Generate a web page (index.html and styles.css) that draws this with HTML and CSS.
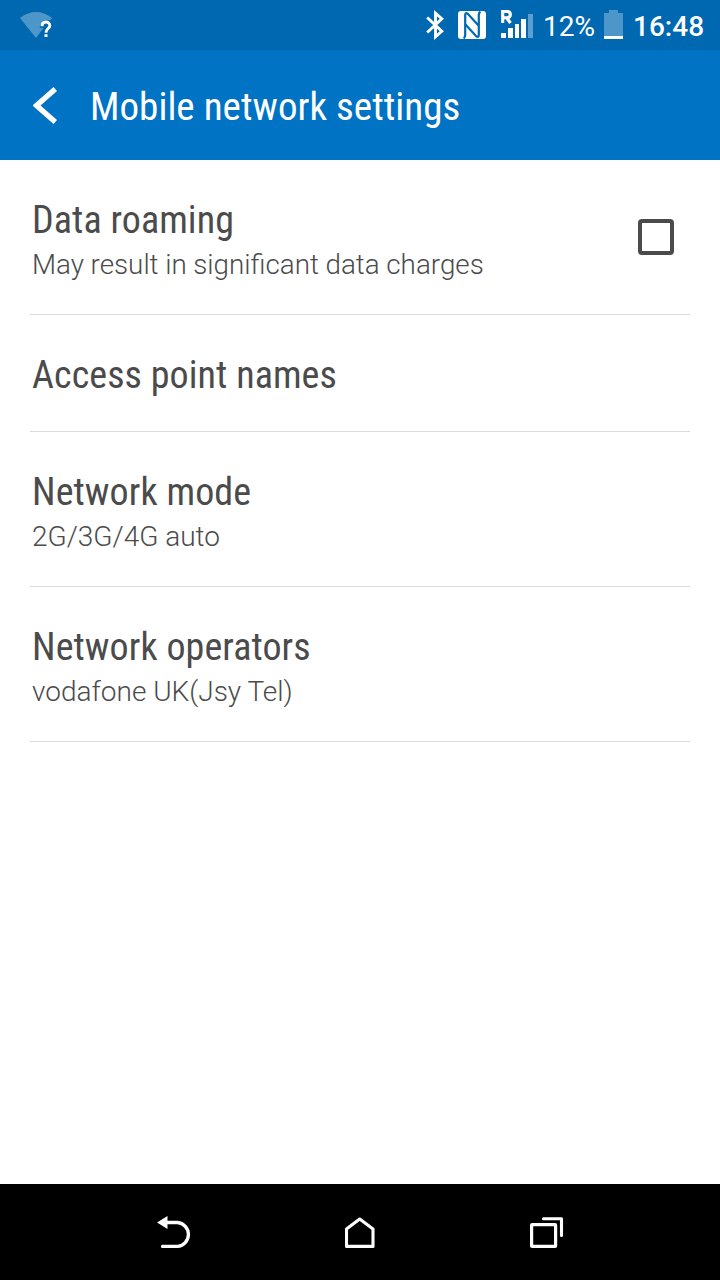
FILE: index.html
```html
<!DOCTYPE html>
<html lang="en">
<head>
    <meta charset="UTF-8">
    <meta name="viewport" content="width=device-width, initial-scale=1.0">
    <title>Mobile network settings</title>
    <link rel="stylesheet" href="styles.css">
</head>
<body>

    <div class="status-bar">
        <svg class="icon-wifi" width="34" height="30" viewBox="0 0 34 30">
            <path d="M0 6 Q16 -5.800 32 6 L30.500 8.200 C25 6.300 19.800 9.500 19.800 16 H23.500 L16 26 Z" fill="#4d96c9"/>
            <path d="M22 14.300 C22 8.700 29.800 8.700 29.800 13.500 C29.800 16.700 26 16.500 26 20.800" fill="none" stroke="#fff" stroke-width="2.900"/>
            <rect x="24.500" y="22.200" width="3" height="2.800" fill="#fff"/>
        </svg>

        <div class="status-right">
            <svg class="icon-bluetooth" width="18" height="30" viewBox="0 0 18 30">
                <path d="M1.200 7.500 L15.800 21.300 L9.500 26.800 V3.200 L15.800 8.700 L1.200 22.500" fill="none" stroke="#fff" stroke-width="2.900"/>
            </svg>
            <svg class="icon-nfc" width="28" height="28" viewBox="0 0 28 28">
                <rect width="28" height="28" rx="3" fill="#fff"/>
                <path d="M5.500 27.300 Q7.200 26.500 7.200 24 V4 Q7.200 1.200 9.800 2.800 L20.500 14.500" fill="none" stroke="#0068b0" stroke-width="2.200"/>
                <path d="M22.500 .700 Q20.800 1.500 20.800 4 V24 Q20.800 26.800 18.200 25.200 L7.500 13.500" fill="none" stroke="#0068b0" stroke-width="2.200"/>
            </svg>
            <svg class="icon-signal" width="32" height="28" viewBox="0 0 32 28">
                <path d="M1.700 13 V1.500 H6 C10.500 1.500 10.500 7.700 6 7.700 H2 M5.500 7.700 L9.500 13" fill="none" stroke="#fff" stroke-width="3.100"/>
                <path d="M0 23h5v5H0zM7 18h5v10H7zM14 14h4v14h-4zM20 9h5v19h-5z" fill="#fff"/>
                <path d="M27 4h5v24h-5z" fill="#5c9fcf"/>
            </svg>
            <span class="battery-level">12%</span>
            <svg class="icon-battery" width="19" height="29" viewBox="0 0 19 29">
                <path d="M0 3h5V0h9v3h5v23H0z" fill="#4d96c9"/>
                <path d="M0 26h19v3H0z" fill="#fff"/>
            </svg>
            <span class="clock">16:48</span>
        </div>
    </div>

    <header class="header">
        <svg class="icon-back" width="24" height="37" viewBox="0 0 24 37">
            <path d="M22.300 2 L3.500 18.500 L22.300 35" fill="none" stroke="#fff" stroke-width="5.400"/>
        </svg>
        <h1 class="header-title">Mobile network settings</h1>
    </header>

    <main class="settings">
        <div class="setting">
            <div class="setting-text">
                <h2 class="setting-title">Data roaming</h2>
                <p class="setting-summary sentence">May result in significant data charges</p>
            </div>
            <span class="checkbox"></span>
        </div>
        <div class="setting">
            <div class="setting-text">
                <h2 class="setting-title">Access point names</h2>
            </div>
        </div>
        <div class="setting">
            <div class="setting-text">
                <h2 class="setting-title">Network mode</h2>
                <p class="setting-summary">2G/3G/4G auto</p>
            </div>
        </div>
        <div class="setting">
            <div class="setting-text">
                <h2 class="setting-title">Network operators</h2>
                <p class="setting-summary">vodafone UK(Jsy Tel)</p>
            </div>
        </div>
    </main>

    <nav class="nav-bar">
        <svg class="nav-back" width="35" height="34" viewBox="0 0 35 34">
            <path d="M9 6.500 H20.500 A12 12 0 0 1 20.500 30.400 H5.500" fill="none" stroke="#fff" stroke-width="3.300" stroke-linecap="round"/>
            <path d="M0 6.500 L10.500 0 V13 Z" fill="#fff"/>
        </svg>
        <svg class="nav-home" width="30" height="32" viewBox="0 0 30 32">
            <path d="M1.500 12 L14.700 2 L28 12 V29.400 H1.500 Z" fill="none" stroke="#fff" stroke-width="3.100" stroke-linejoin="round"/>
        </svg>
        <svg class="nav-recent" width="34" height="32" viewBox="0 0 34 32">
            <rect x="1.600" y="7.700" width="24" height="21.700" rx=".5" fill="none" stroke="#fff" stroke-width="3.200"/>
            <path d="M13.500 1.700 H31.500 V18.500" fill="none" stroke="#fff" stroke-width="3.100" stroke-linecap="round" stroke-linejoin="round"/>
        </svg>
    </nav>

</body>
</html>
```
FILE: styles.css
```css
:root {
    --status-blue: #0068b0;
    --header-blue: #0073c4;
    --text-dark: #4b4b4b;
    --divider: #dcdcdc;
}

* { box-sizing: border-box; }

body {
    font-family: Roboto, "Liberation Sans", sans-serif;
    margin: 0;
    height: 1280px;
    display: flex;
    flex-direction: column;
    background-color: #fff;
    color: var(--text-dark);
    overflow: hidden;
}

svg { display: block; flex-shrink: 0; }
h1, h2, p { margin: 0; white-space: nowrap; }

/* Status bar */
.status-bar {
    height: 50px;
    padding: 0 16px 0 20px;
    display: flex;
    justify-content: space-between;
    align-items: flex-start;
    background-color: var(--status-blue);
    color: #fff;
}
.icon-wifi { margin-top: 12px; }
.status-right { display: flex; align-items: flex-start; }
.icon-bluetooth { margin: 10px 14px 0 0; }
.icon-nfc { margin: 11px 15px 0 0; }
.icon-signal { margin: 10px 10px 0 0; }
.battery-level, .clock { font-size: 28px; line-height: 34px; margin-top: 10px; }
.battery-level { width: 53px; margin-right: 8px; }
.icon-battery { margin: 10px 10px 0 0; }
.clock { width: 71px; font-weight: 500; }

/* Header */
.header {
    height: 110px;
    padding: 0 33px;
    display: flex;
    align-items: center;
    background-color: var(--header-blue);
    color: #fff;
}
.header-title {
    margin: 4px 0 0 33px;
    font-family: "Roboto Condensed", Roboto, sans-serif;
    font-stretch: 75%;
    font-size: 39px;
    font-weight: 400;
    line-height: 46px;
    letter-spacing: 0.04px;
}

/* Settings list */
.settings { flex: 1; padding: 0 30px; }
.setting {
    padding: 38px 16px 34px 2px;
    display: flex;
    justify-content: space-between;
    border-bottom: 1px solid var(--divider);
}
.setting-title {
    font-family: "Roboto Condensed", Roboto, sans-serif;
    font-stretch: 75%;
    font-size: 38px;
    font-weight: 400;
    line-height: 44px;
    letter-spacing: 0.08px;
}
.setting-summary {
    margin: 6px 0 -1px;
    font-size: 28px;
    font-weight: 300;
    line-height: 33px;
}
.setting-summary.sentence { font-size: 27.8px; word-spacing: -0.2px; }
.checkbox {
    width: 36px;
    height: 36px;
    margin-top: 21px;
    border: 4px solid var(--text-dark);
    border-radius: 4px;
}

/* Navigation bar */
.nav-bar {
    height: 96px;
    padding: 32px 0 0 157px;
    display: flex;
    background-color: #000;
}
.nav-home { margin: 1px 0 0 153px; }
.nav-recent { margin: 1px 0 0 155px; }
```
